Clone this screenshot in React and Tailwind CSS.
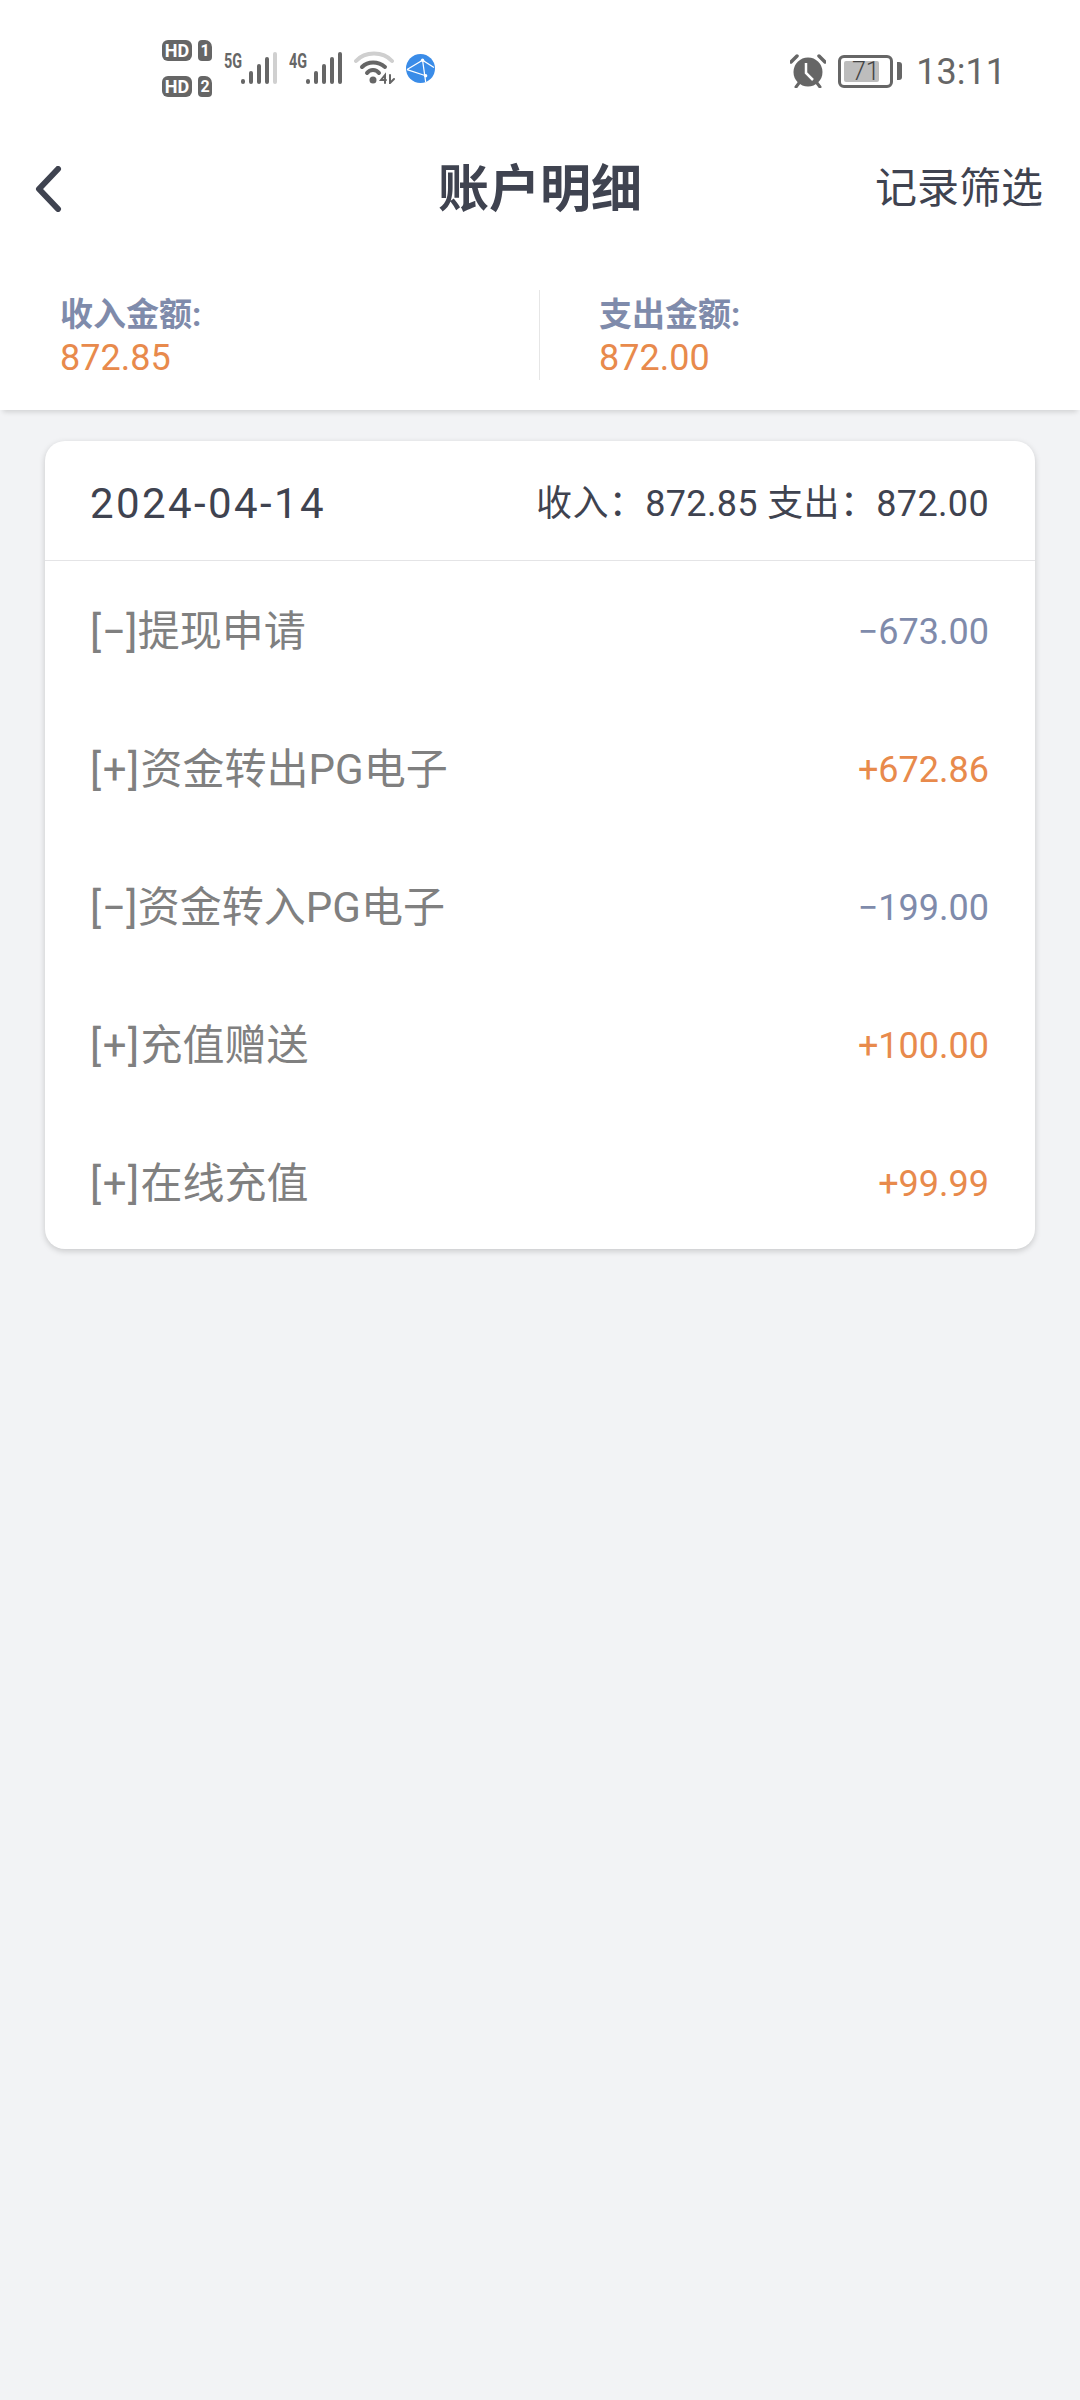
import React from 'react';

const FONT = "font-['Roboto','Noto_Sans_CJK_SC',sans-serif]";

const rows = [
  { sign: '[−]', label: '提现申请', amount: '−673.00', minus: true },
  { sign: '[+]', label: '资金转出PG电子', amount: '+672.86' },
  { sign: '[−]', label: '资金转入PG电子', amount: '−199.00', minus: true },
  { sign: '[+]', label: '充值赠送', amount: '+100.00' },
  { sign: '[+]', label: '在线充值', amount: '+99.99' },
];

function HdBadge({ n }) {
  return (
    <div className="flex items-center gap-[6px]">
      <span className="flex h-[21px] w-[30px] items-center justify-center rounded-[6px] bg-[#666] text-[18px] font-bold leading-none text-white">HD</span>
      <span className="flex h-[21px] w-[14px] items-center justify-center rounded-[4px] rounded-tr-[7px] bg-[#666] text-[16px] font-bold leading-none text-white">{n}</span>
    </div>
  );
}

// net type label plus five signal bars; dim greys out the tallest bar
function Signal({ net, dim }) {
  const bars = [5, 13, 20, 27, 32];
  return (
    <div className="relative h-[34px] w-[53px]">
      <span className="absolute left-0 top-[1px] origin-left scale-x-[0.72] text-[20px] font-bold leading-none text-[#666]">{net}</span>
      <div className="absolute bottom-0 right-0 flex items-end gap-[3.5px]">
        {bars.map((h, i) => (
          <div
            key={i}
            className={`w-[4.5px] rounded-full ${i === 4 && dim ? 'bg-[#d0d0d0]' : 'bg-[#666]'}`}
            style={{ height: h }}
          />
        ))}
      </div>
    </div>
  );
}

function Wifi() {
  return (
    <svg width="42" height="34" viewBox="0 0 42 34" fill="none" strokeLinecap="round">
      <path d="M2 11 C11 1 29 1 38 11" stroke="#cfcfcf" strokeWidth="4" />
      <path d="M8 17 C14 11 24 11 31 17" stroke="#666" strokeWidth="4" />
      <path d="M13 23 C16 19 22 19 25 23" stroke="#666" strokeWidth="4" />
      <circle cx="19" cy="30" r="3.5" fill="#666" />
      <path d="M31 33 V25 L27 30 H32 M36 25 V33 L40 29" stroke="#666" strokeWidth="2" />
    </svg>
  );
}

function Globe() {
  return (
    <svg width="29" height="29" viewBox="0 0 28 28" fill="none">
      <circle cx="14" cy="14" r="14" fill="#3a8ce8" />
      <path d="M1 15 L16 6 L27 13 M16 6 L19 27 M1 15 L19 21" stroke="#fff" strokeWidth="1.2" />
      <circle cx="16" cy="6" r="1.6" fill="#fff" />
      <circle cx="19" cy="21" r="1.6" fill="#fff" />
    </svg>
  );
}

function Alarm() {
  return (
    <svg width="36" height="34" viewBox="0 0 36 34" fill="none">
      <path d="M1 8 L7 2 M35 8 L29 2" stroke="#666" strokeWidth="3.5" strokeLinecap="round" />
      <circle cx="18" cy="18" r="14.5" fill="#666" />
      <path d="M6 33 L9 29 M30 33 L27 29" stroke="#666" strokeWidth="3" strokeLinecap="round" />
      <path d="M16 9 V19 L23 26" stroke="#fff" strokeWidth="2.5" />
    </svg>
  );
}

function Battery() {
  return (
    <div className="flex items-center gap-[4px]">
      <div className="relative h-[33px] w-[55px] rounded-[6px] border-[3px] border-[#666] p-[3px]">
        <div className="h-full w-[35px] rounded-[2px] bg-[#bdbdbd]" />
        <span className="absolute inset-0 flex items-center justify-center text-[25px] font-light leading-none text-[#444]">71</span>
      </div>
      <div className="h-[18px] w-[5px] rounded-r-[3px] bg-[#666]" />
    </div>
  );
}

function StatusBar() {
  return (
    <div className="flex h-[140px] items-start justify-between pl-[162px] pr-[74px]">
      <div className="mt-[40px] flex items-start">
        <div className="flex flex-col gap-[15px]">
          <HdBadge n="1" />
          <HdBadge n="2" />
        </div>
        <div className="ml-[12px] mt-[10px] flex items-start gap-[12px]">
          <Signal net="5G" dim />
          <Signal net="4G" />
          <Wifi />
          <div className="ml-[-2px] mt-[4px]"><Globe /></div>
        </div>
      </div>
      <div className="mt-[52px] flex items-center">
        <Alarm />
        <div className="ml-[12px]"><Battery /></div>
        <span className="ml-[14px] pt-[2px] text-[36px] leading-none text-[#666]">13:11</span>
      </div>
    </div>
  );
}

function NavBar() {
  return (
    <div className="relative flex h-[96px] items-center justify-between pl-[34px] pr-[37px] pt-[2px]">
      <svg width="30" height="46" viewBox="0 0 30 46" fill="none">
        <path d="M24 3 L5 23 L24 43" stroke="#3f4350" strokeWidth="6" strokeLinecap="round" strokeLinejoin="round" />
      </svg>
      <h1 className="absolute inset-x-0 text-center text-[51px] font-bold leading-none text-[#3f4350]">账户明细</h1>
      <span className="text-[42px] leading-none text-[#3f4350]">记录筛选</span>
    </div>
  );
}

function SummaryItem({ label, value }) {
  return (
    <>
      <div className="text-[33px] font-bold leading-[42px] text-[#7f8bab]">{label}</div>
      <div className="text-[36px] leading-[44px] text-[#e88a4c]">{value}</div>
    </>
  );
}

function Summary() {
  return (
    <div className="relative z-10 flex h-[174px] bg-white pt-[54px] shadow-[0_5px_5px_-3px_rgba(0,0,0,0.14)]">
      <div className="h-[90px] w-[540px] border-r border-[#e6e6e6] pl-[60px] pt-[4px]">
        <SummaryItem label="收入金额:" value="872.85" />
      </div>
      <div className="h-[90px] pl-[59px] pt-[4px]">
        <SummaryItem label="支出金额:" value="872.00" />
      </div>
    </div>
  );
}

export default function App() {
  return (
    <div className={`flex min-h-[2400px] flex-col bg-[#f2f3f5] ${FONT}`}>
      <div className="bg-white">
        <StatusBar />
        <NavBar />
      </div>
      <Summary />
      <div className="mx-[45px] mt-[31px] rounded-[20px] bg-white shadow-[0_2px_6px_rgba(0,0,0,0.18)]">
        <div className="flex h-[120px] items-center justify-between border-b border-[#e4e4e6] pl-[45px] pr-[46px] pt-[7px] text-[#3f4350]">
          <span className="text-[42px] leading-none tracking-[2.4px]">2024-04-14</span>
          <span className="text-[36px] leading-none tracking-[0.35px]">收入：872.85 支出：872.00</span>
        </div>
        <div className="-mb-[4px] pt-[2px]">
          {rows.map((r) => (
            <div key={r.label} className="flex h-[138px] items-center justify-between pl-[45px] pr-[46px]">
              <span className="text-[42px] leading-none text-[#808080]">
                <span className={r.minus ? 'tracking-[0.5px]' : 'tracking-[1.5px]'}>{r.sign}</span>
                {r.label}
              </span>
              <span className={`text-[36px] leading-none ${r.minus ? 'text-[#7f8bab]' : 'text-[#e88a4c]'}`}>{r.amount}</span>
            </div>
          ))}
        </div>
      </div>
    </div>
  );
}
